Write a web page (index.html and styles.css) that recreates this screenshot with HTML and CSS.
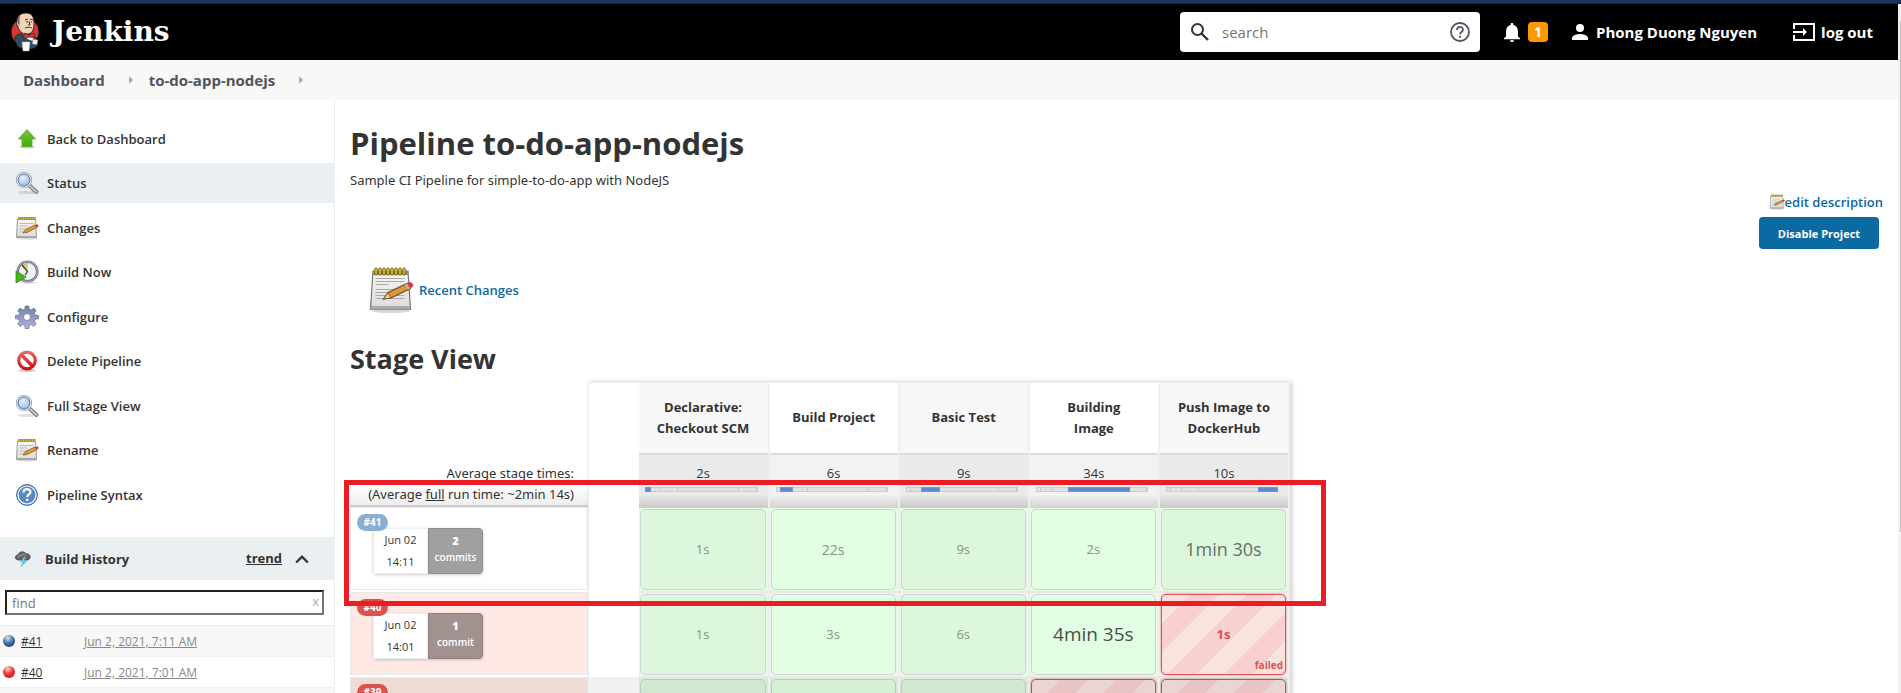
FILE: index.html
```html
<!DOCTYPE html>
<html lang="en">
<head>
<meta charset="utf-8">
<title>to-do-app-nodejs [Jenkins]</title>
<link rel="stylesheet" href="styles.css">
</head>
<body>
<svg class="defs" aria-hidden="true">
  <defs>
    <linearGradient id="gGreen" x1="0" y1="0" x2="0" y2="1"><stop offset="0" stop-color="#7cc243"/><stop offset="1" stop-color="#3fae05"/></linearGradient>
    <linearGradient id="gGear" x1="0" y1="0" x2="0" y2="1"><stop offset="0" stop-color="#6f82ad"/><stop offset="1" stop-color="#b5b3dc"/></linearGradient>
    <linearGradient id="gRed" gradientUnits="userSpaceOnUse" x1="0" y1="2" x2="0" y2="21"><stop offset="0" stop-color="#ee6a6a"/><stop offset="1" stop-color="#c80d0d"/></linearGradient>
    <linearGradient id="gPaper" x1="0" y1="0" x2="0" y2="1"><stop offset="0" stop-color="#f7f7f7"/><stop offset="1" stop-color="#dcdcdc"/></linearGradient>
    <radialGradient id="gBlueBall" cx=".4" cy=".25" r=".7"><stop offset="0" stop-color="#e4ecdc"/><stop offset=".5" stop-color="#5583ba"/><stop offset="1" stop-color="#1f4b8c"/></radialGradient>
    <radialGradient id="gRedBall" cx=".4" cy=".25" r=".7"><stop offset="0" stop-color="#ffd9d0"/><stop offset=".5" stop-color="#f24a4a"/><stop offset="1" stop-color="#df1414"/></radialGradient>
    <radialGradient id="gLens" cx=".4" cy=".35" r=".7"><stop offset="0" stop-color="#e3effa"/><stop offset="1" stop-color="#8fb6e2"/></radialGradient>
  </defs>
  <symbol id="notepad" viewBox="0 0 48 48">
    <ellipse cx="23" cy="45" rx="19" ry="2" fill="#000" opacity=".15"/>
    <path d="M5 5h35l2.500 38.500h-40z" fill="url(#gPaper)" stroke="#777" stroke-width="1.200"/>
    <path d="M3 40h39v3.500H2.500z" fill="#aaa"/>
    <path d="M5 5h35v4H4.800z" fill="#8c8c84"/>
    <path d="M7.500 12.500h29M7.500 15.500h29M7.500 18.500h13M7.500 23.500h20M7.500 26.500h18M7.500 29.500h29M7.500 32.500h29" stroke="#aaa"/>
    <path d="M8 3v5M12 3v5M16 3v5M20 3v5M24 3v5M28 3v5M32 3v5M36 3v5" stroke="#6c5a05" stroke-width="3.200" stroke-linecap="round"/>
    <path d="M8 3v5M12 3v5M16 3v5M20 3v5M24 3v5M28 3v5M32 3v5M36 3v5" stroke="#f1d53a" stroke-width="1.400" stroke-linecap="round"/>
    <path d="M15.500 33l4.500-6.500L39 17.500l3.500 5L23 32z" fill="#d89a3c" stroke="#70481a" stroke-width="1.200"/>
    <path d="M15.500 33l4.500-6.500 3 5.500z" fill="#e8cf9c" stroke="#70481a" stroke-width=".8"/>
    <path d="M38 18l2-1c3-1.500 6 1 4.500 3.500L41.500 23z" fill="#e8312f" stroke="#a44" stroke-width=".6"/>
    <path d="M37 18.500l1.800-.9 3.400 5-2 1z" fill="#b9b9b9"/>
  </symbol>
  <symbol id="notepad-small" viewBox="0 0 24 24">
    <ellipse cx="12" cy="22.500" rx="10" ry="1" fill="#000" opacity=".15"/>
    <path d="M2.500 3h18l1 18.500h-20z" fill="url(#gPaper)" stroke="#999" stroke-width="1"/>
    <path d="M2 20h19.500v1.500H2z" fill="#aaa"/>
    <path d="M4.500 7.500h14M4.500 10h8M4.500 13h10M4.500 16h6" stroke="#bbb"/>
    <path d="M3 2.500h17.500" stroke="#a28c2a" stroke-width="3"/>
    <path d="M3.500 2.500h17" stroke="#ddc95a" stroke-width="2" stroke-dasharray="1 1.300"/>
    <path d="M8 17l2.500-3.500L20 9l2 2.500L12 16.500z" fill="#dd9b3e" stroke="#7a4e1a" stroke-width=".7"/>
    <path d="M19.800 9.200l1.500-.7c1.500-.5 3 .8 2 2l-1.500 1.100z" fill="#e8312f"/>
  </symbol>
  <symbol id="magnifier" viewBox="0 0 24 24">
    <ellipse cx="12" cy="21.500" rx="9" ry="1.600" fill="#000" opacity=".12"/>
    <path d="M14.500 14.500l7 6.500" stroke="#777" stroke-width="4" stroke-linecap="round"/>
    <path d="M14.500 14.500l7 6.500" stroke="#c6c6c6" stroke-width="2" stroke-linecap="round"/>
    <circle cx="9" cy="9" r="7" fill="url(#gLens)" stroke="#8f9296" stroke-width="2.200"/>
    <circle cx="9" cy="9" r="7" fill="none" stroke="#e5e7e9" stroke-width="1.100"/>
    <circle cx="9" cy="9" r="5.800" fill="none" stroke="#4b7fbe" stroke-width=".8"/>
  </symbol>
</svg>

<div class="strip"></div>
<div class="viewport">
  <div class="page">
    <header class="header">
      <a class="brand" href="#">
        <svg class="brand-logo" viewBox="0 0 28 40" role="img" aria-label="Jenkins logo">
          <ellipse cx="14" cy="20" rx="13.500" ry="14" fill="#d33833"/>
          <path d="M4 25c2-2 5-4 8-3l9 1c4 1 5 4 5 7v5c-6 3-14 3-19 0C5 32 3 28 4 25z" fill="#2f4b5c" stroke="#111" stroke-width=".7"/>
          <path d="M6 9C6 4 10 1 15 1c6 0 8 4 8 10 0 7-2 11-7 11-6 0-9-5-9-8-2-1-2-3-1-5z" fill="#f0d6b7" stroke="#201010" stroke-width=".8"/>
          <path d="M6 9c0-3 2-5 3-6 0 4-1 6 0 10-2 0-3-2-3-4z" fill="#857064"/>
          <path d="M14 8l3-1M19 7l3 1M18 9l1 4h-2M14 16c2-1 5-1 7 0M15 10h2M20 10h1" fill="none" stroke="#231f20" stroke-width=".9"/>
          <path d="M11 20l6 5 6-3-1 7-6-2z" fill="#fff"/>
          <path d="M13 21l5 2 5-2 1 5-6-1-5 2z" fill="#d33833" stroke="#231f20" stroke-width=".6"/>
          <path d="M11 30h8l-1 9h-6z" fill="#fff" stroke="#aaa" stroke-width=".5"/>
          <path d="M22 27l5 1-1 5-5-1z" fill="#eee" stroke="#555" stroke-width=".5"/>
        </svg>
        <span class="brand-name">Jenkins</span>
      </a>
      <form class="search" role="search">
        <svg class="search-icon" viewBox="0 0 20 20"><circle cx="7.500" cy="7.500" r="5.500" fill="none" stroke="#333" stroke-width="2"/><path d="M11.500 11.500l6.500 6.500" stroke="#333" stroke-width="2.400"/></svg>
        <input class="search-input" type="text" placeholder="search" aria-label="search">
        <a class="search-help" href="#" aria-label="Help"><svg viewBox="0 0 20 20"><circle cx="10" cy="10" r="9" fill="none" stroke="#4d545d" stroke-width="1.800"/><path d="M7 8c0-4 6-4 6-.3C13 10 10 10 10 12.300M10 13.700v2" fill="none" stroke="#4d545d" stroke-width="1.800"/></svg></a>
      </form>
      <button class="bell" type="button" aria-label="1 notification">
        <svg viewBox="0 0 16 20"><path d="M8 20c1.200 0 2-.8 2-1.800H6C6 19.200 6.800 20 8 20zM14 14.500V9.500c0-3.200-1.700-5.700-4.600-6.400V2.200C9.400.600 6.600.6 6.600 2.200v.9C3.700 3.800 2 6.300 2 9.500v5L0 16.300v.9h16v-.9z" fill="#fff"/></svg>
        <span class="badge">1</span>
      </button>
      <a class="user" href="#"><svg viewBox="0 0 16 16"><circle cx="8" cy="4" r="4" fill="#fff"/><path d="M0 16v-2c0-2.700 5.300-4 8-4s8 1.300 8 4v2z" fill="#fff"/></svg>Phong Duong Nguyen</a>
      <a class="logout" href="#"><svg viewBox="0 0 22 18"><path d="M1 6V1h20v16H1V12M0 9h12" fill="none" stroke="#fff" stroke-width="2"/><path d="M10 5l4 4-4 4z" fill="#fff"/></svg>log out</a>
    </header>

    <nav class="crumbs" aria-label="Breadcrumb">
      <a href="#">Dashboard</a><i class="crumb-arrow"></i>
      <a href="#">to-do-app-nodejs</a><i class="crumb-arrow"></i>
    </nav>

    <div class="body">
      <aside class="side">
        <ul class="tasks">
          <li><a class="task" href="#"><svg viewBox="0 0 24 24"><ellipse cx="12" cy="20" rx="8" ry="1.500" opacity=".2"/><path d="M12 2.500L3.500 12H7v7.500h10V12h3.500z" fill="url(#gGreen)" stroke="#5aa02c" stroke-width=".8"/></svg>Back to Dashboard</a></li>
          <li><a class="task is-active" href="#"><svg><use href="#magnifier"/></svg>Status</a></li>
          <li><a class="task" href="#"><svg><use href="#notepad-small"/></svg>Changes</a></li>
          <li><a class="task" href="#"><svg viewBox="0 0 24 24"><ellipse cx="14" cy="22.500" rx="8" ry="1.200" opacity=".15"/><circle cx="12.500" cy="11.500" r="9.800" fill="#f2f2ee" stroke="#74789a" stroke-width="2.600"/><circle cx="12.500" cy="11.500" r="10" fill="none" stroke="#b2b4cc" stroke-width=".8"/><path d="M12.500 11.500L7 5c2-2 4-2 6-2z" fill="#e3c755"/><path d="M7 5l5.500 6.500L10 15" fill="none" stroke="#333" stroke-width="1.200"/><path d="M1 11v12l10-6z" fill="#48b41a" stroke="#2f8a0c" stroke-width=".8"/></svg>Build Now</a></li>
          <li><a class="task" href="#"><svg viewBox="0 0 24 24"><path fill-rule="evenodd" d="M10.300 1h3.400l.5 3.200 2 .8 2.600-1.900 2.400 2.400L19.300 8l.8 2.100 3.400.4v3.200l-3.400.5-.8 2 1.900 2.700-2.400 2.400-2.600-1.900-2 .8-.5 3.300h-3.400l-.5-3.300-2-.8-2.600 1.900-2.400-2.400 1.900-2.700-.8-2-3.400-.5v-3.200l3.400-.4.8-2.100-1.900-2.500L5.200 3.100 7.800 5l2-.8zM12 8.500a3.500 3.500 0 100 7 3.500 3.500 0 000-7z" fill="url(#gGear)" stroke="#6c759f" stroke-width=".8"/></svg>Configure</a></li>
          <li><a class="task" href="#"><svg viewBox="0 0 24 24"><ellipse cx="12" cy="21.500" rx="9" ry="1.500" opacity=".2"/><path d="M5.500 5l13 13" stroke="url(#gRed)" stroke-width="3.500"/><circle cx="12" cy="11.500" r="8.300" fill="none" stroke="url(#gRed)" stroke-width="3.200"/></svg>Delete Pipeline</a></li>
          <li><a class="task" href="#"><svg><use href="#magnifier"/></svg>Full Stage View</a></li>
          <li><a class="task" href="#"><svg><use href="#notepad-small"/></svg>Rename</a></li>
          <li><a class="task" href="#"><svg viewBox="0 0 24 24"><circle cx="12" cy="12" r="10.400" fill="#5f8fc9" stroke="#3465a4" stroke-width="1"/><circle cx="12" cy="12" r="9" fill="#5a88c0" stroke="#fff" stroke-width="1.200"/><path d="M8.500 9.500C8.500 5 15.500 5.300 15.500 9c0 2.500-3.300 2.400-3.300 5M12.200 15.700v2.400" fill="none" stroke="#fff" stroke-width="2.200"/></svg>Pipeline Syntax</a></li>
        </ul>

        <section class="history">
          <div class="history-head">
            <svg class="storm" viewBox="0 0 16 16"><path d="M3 9C-1 8 0 4 3 4c1-4 7-4 8-1 4-1 6 4 2 6z" fill="#666" stroke="#444" stroke-width=".8"/><path d="M3 6c1-2 2-1 3-1 1-2 3-2 5 0" fill="none" stroke="#aaa"/><path d="M9 6L5.500 11H8l-2 5 6-6.500H9l2-3.500z" fill="#5ad2f5" stroke="#2b9ed0" stroke-width=".4"/></svg>
            <h2>Build History</h2>
            <a href="#">trend</a>
            <button class="collapse" type="button" aria-label="Collapse"><svg viewBox="0 0 12 8"><path d="M1 7l5-5 5 5" fill="none" stroke="#333" stroke-width="2"/></svg></button>
          </div>
          <div class="find">
            <input type="text" placeholder="find" aria-label="find">
            <button type="button" aria-label="Clear">x</button>
          </div>
          <table class="builds">
            <tr><td class="ball"><svg viewBox="0 0 14 14"><circle cx="7" cy="7" r="6" fill="url(#gBlueBall)"/></svg></td><td class="num"><a href="#">#41</a></td><td><a class="when" href="#">Jun 2, 2021, 7:11 AM</a></td></tr>
            <tr><td class="ball"><svg viewBox="0 0 14 14"><circle cx="7" cy="7" r="6" fill="url(#gRedBall)"/></svg></td><td class="num"><a href="#">#40</a></td><td><a class="when" href="#">Jun 2, 2021, 7:01 AM</a></td></tr>
            <tr><td class="ball"></td><td class="num"></td><td></td></tr>
          </table>
        </section>
      </aside>

      <main class="main">
        <h1>Pipeline to-do-app-nodejs</h1>
        <p class="desc">Sample CI Pipeline for simple-to-do-app with NodeJS</p>
        <div class="actions">
          <a class="edit" href="#"><svg><use href="#notepad-small"/></svg>edit description</a>
          <button class="disable" type="button">Disable Project</button>
        </div>
        <a class="recent" href="#"><svg><use href="#notepad"/></svg>Recent Changes</a>
        <h2 class="stage-title">Stage View</h2>

        <div class="stage-view">
          <div class="legend">
            <div class="legend-avg"><span>Average stage times:</span><span>(Average <u>full</u> run time: ~2min 14s)</span></div>
            <div class="run"><span class="run-id ok">#41</span><div class="run-box"><div class="date"><span>Jun 02</span><span>14:11</span></div><div class="commits"><b>2</b><span>commits</span></div></div></div>
            <div class="run bad"><span class="run-id">#40</span><div class="run-box"><div class="date"><span>Jun 02</span><span>14:01</span></div><div class="commits"><b>1</b><span>commit</span></div></div></div>
            <div class="run bad dim"><span class="run-id">#39</span></div>
          </div>
          <table class="stages">
            <thead>
              <tr class="names"><th class="gutter"></th><th>Declarative:<br>Checkout SCM</th><th>Build Project</th><th>Basic Test</th><th>Building<br>Image</th><th>Push Image to<br>DockerHub</th></tr>
              <tr class="avgs">
                <td class="gutter"></td>
                <td><span>2s</span><div class="bar"><i class="on" style="width:4%"></i><i style="width:10%"></i><i style="width:15%"></i><i style="width:55%"></i><i style="width:16%"></i></div></td>
                <td><span>6s</span><div class="bar"><i style="width:4%"></i><i class="on" style="width:10%"></i><i style="width:15%"></i><i style="width:55%"></i><i style="width:16%"></i></div></td>
                <td><span>9s</span><div class="bar"><i style="width:4%"></i><i style="width:10%"></i><i class="on" style="width:15%"></i><i style="width:55%"></i><i style="width:16%"></i></div></td>
                <td><span>34s</span><div class="bar"><i style="width:4%"></i><i style="width:10%"></i><i style="width:15%"></i><i class="on" style="width:55%"></i><i style="width:16%"></i></div></td>
                <td><span>10s</span><div class="bar"><i style="width:4%"></i><i style="width:10%"></i><i style="width:15%"></i><i style="width:55%"></i><i class="on" style="width:16%"></i></div></td>
              </tr>
            </thead>
            <tbody>
              <tr><td class="gutter"></td><td><div class="cell">1s</div></td><td><div class="cell mid">22s</div></td><td><div class="cell">9s</div></td><td><div class="cell">2s</div></td><td><div class="cell long">1min 30s</div></td></tr>
              <tr><td class="gutter"></td><td><div class="cell">1s</div></td><td><div class="cell">3s</div></td><td><div class="cell">6s</div></td><td><div class="cell longest">4min 35s</div></td><td class="failed"><div class="cell fail">1s<small>failed</small></div></td></tr>
              <tr class="dim"><td class="gutter"></td><td><div class="cell"></div></td><td><div class="cell"></div></td><td><div class="cell"></div></td><td class="failed"><div class="cell fail"></div></td><td class="failed"><div class="cell fail"></div></td></tr>
            </tbody>
          </table>
          <div class="marker"></div>
        </div>
      </main>
    </div>
  </div>
  <div class="scroll-track"><div class="scroll-thumb"></div></div>
</div>
</body>
</html>
```
FILE: styles.css
```css
* { box-sizing: border-box; }
body { margin: 0; height: 100vh; overflow: hidden; display: flex; flex-direction: column; background: #fff; color: #333; font: 13px/21px "Open Sans", "Noto Sans", sans-serif; }
a { color: inherit; text-decoration: none; }
button { font: inherit; cursor: pointer; }
h1, h2, p, ul { margin: 0; padding: 0; }
table { border-collapse: collapse; }
.defs { position: absolute; width: 0; height: 0; }
.strip { height: 4px; flex: none; background: #1b365d; border-bottom: 1px solid #10233f; }
.viewport { flex: 1; min-height: 0; display: flex; }
.page { flex: 1; min-width: 0; display: flex; flex-direction: column; overflow: hidden; }
.scroll-track { width: 3px; background: #f1f1f1; padding: 17px 0 0 2px; }
.scroll-thumb { height: 76%; background: #c1c1c1; }

.header { flex: none; height: 56px; background: #000; color: #fff; display: flex; align-items: center; padding: 0 25px 0 11px; font-size: 15px; font-weight: 700; }
.brand { display: flex; align-items: center; gap: 13px; margin-right: auto; }
.brand-logo { width: 28px; height: 40px; }
.brand-name { font: bold 28px/36px "DejaVu Serif", serif; }
.search { width: 300px; height: 40px; display: flex; align-items: center; background: #fff; border-radius: 4px; padding: 0 10px; margin-right: 24px; }
.search-icon { width: 20px; height: 20px; flex: none; }
.search-input { flex: 1; min-width: 0; border: 0; outline: 0; background: none; padding: 0 12px; font: 15px/20px "Open Sans", sans-serif; }
.search-input::placeholder { color: #757575; }
.search-help { width: 20px; height: 20px; }
.search-help svg { display: block; }
.bell { display: flex; align-items: center; gap: 8px; padding: 0; border: 0; background: none; color: #fff; margin-right: 24px; }
.bell svg { width: 16px; height: 20px; }
.badge { width: 20px; height: 20px; border-radius: 4px; background: #ff9800; font-size: 14px; line-height: 20px; }
.user, .logout { display: flex; align-items: center; white-space: nowrap; }
.user { gap: 8px; margin-right: 36px; }
.user svg { width: 16px; height: 16px; }
.logout { gap: 6px; }
.logout svg { width: 22px; height: 18px; }

.crumbs { flex: none; height: 40px; background: #f8f8f8; display: flex; align-items: center; padding-left: 23px; color: #4d545d; font-size: 15px; font-weight: 700; }
.crumb-arrow { border-left: 4px solid #a9adb1; border-top: 4px solid transparent; border-bottom: 4px solid transparent; margin: 0 16px 0 24px; }

.body { flex: 1; min-height: 0; display: flex; }
.side { width: 335px; flex: none; border-right: 1px solid #eaeff2; }
.tasks { list-style: none; padding: 19px 0 18px; }
.tasks li { margin-bottom: 4px; }
.tasks li:nth-child(even) { margin-bottom: 5px; }
.task { height: 40px; display: flex; align-items: center; gap: 8px; padding-left: 15px; font-size: 13px; font-weight: 600; }
.task.is-active { background: #eaeff2; }
.task svg { width: 24px; height: 24px; }
.history-head { height: 43px; background: #eaeff2; display: flex; align-items: center; padding: 0 25px 0 15px; }
.storm { width: 16px; height: 16px; margin-right: 14px; }
.history-head h2 { font-size: 13px; line-height: 20px; margin-right: auto; }
.history-head a { font-weight: 700; text-decoration: underline; margin-right: 13px; }
.collapse { border: 0; padding: 0; background: none; width: 14px; height: 12px; display: flex; }
.collapse svg { width: 14px; }
.find { position: relative; margin: 10px 10px 10px 5px; }
.find input { display: block; width: 100%; height: 25px; border: 2px inset #767676; padding: 0 5px; font: 13px/20px "Open Sans", sans-serif; }
.find button { position: absolute; right: 5px; top: 2px; border: 0; background: none; padding: 0; color: #aaa; line-height: 19px; }
.builds { width: 100%; font-size: 12px; }
.builds tr { border-top: 1px solid #eaeff2; }
.builds tr:nth-child(odd) { background: #f8f8f8; }
.builds td { height: 31px; padding: 0; }
.builds a { text-decoration: underline; }
.builds .ball { width: 21px; padding-left: 2px; }
.ball svg { display: block; width: 14px; height: 14px; }
.num { width: 63px; }
.when { color: #888; }

.main { flex: 1; min-width: 0; padding: 23px 15px 0 15px; }
h1 { font-size: 31px; line-height: 40px; }
.desc { font-family: "Noto Sans", sans-serif; line-height: 20px; margin-top: 7px; }
.actions { display: flex; flex-direction: column; align-items: flex-end; gap: 5px; margin-top: 2px; }
.edit { display: flex; align-items: center; color: #0b6aa2; font-weight: 600; line-height: 20px; }
.edit svg { width: 16px; height: 16px; }
.disable { width: 120px; height: 32px; margin-right: 4px; padding: 0; border: 0; border-radius: 4px; background: #0b6aa2; color: #fff; font-size: 11px; font-weight: 700; }
.recent { display: flex; align-items: center; gap: 3px; margin: 17px 0 0 18px; color: #0b6aa2; font-weight: 600; width: max-content; }
.recent svg { width: 48px; height: 48px; }
.stage-title { font-size: 27px; line-height: 36px; margin-top: 27px; }

.stage-view { position: relative; display: flex; margin-top: 5px; }
.legend { width: 238px; padding-top: 72px; }
.legend-avg { height: 53px; display: flex; flex-direction: column; justify-content: flex-end; text-align: right; padding: 0 14px 0 0; border-bottom: 2px solid #ccc; background: linear-gradient(#fff 60%, #eee); font-family: "Noto Sans", sans-serif; }
.run { position: relative; height: 83px; margin-bottom: 2px; border: 1px solid #e6e9eb; padding: 20px 0 0 22px; }
.run.bad { background: #ffe9e4; }
.run.dim { background: #f0dcd7; }
.run-id { position: absolute; left: 6px; top: 6px; min-width: 31px; height: 17px; padding: 0 6px; border-radius: 9px; background: #d9534f; color: #fff; font-size: 10px; font-weight: 700; line-height: 17px; text-align: center; }
.run-id.ok { background: #8aadd2; }
.run-box { display: flex; width: 110px; height: 46px; font-size: 11px; box-shadow: 0 1px 3px #0003; border-radius: 4px; }
.date, .commits { width: 55px; display: flex; flex-direction: column; align-items: center; }
.date { background: #fff; border: 1px solid #eaeff2; justify-content: space-between; line-height: 22px; }
.commits { background: #a0a0a0; border: 1px solid #8d8d8d; border-radius: 0 4px 4px 0; color: #fff; font-size: 10px; font-weight: 600; line-height: 16px; padding-top: 4px; }
.commits b { font-size: 11px; }
.bad .commits { background: #a1928f; border-color: #8d807d; }

.stages { width: 702px; table-layout: fixed; border: 1px solid #e6eeee; box-shadow: 2px 0 5px #0003; }
.stages th, .stages td { padding: 0; text-align: center; border-right: 2px solid #f0eff0; }
.stages .gutter { width: 50px; background: #fff; border-right: 0; }
.names th { height: 71px; font-weight: 700; }
.names th:nth-child(even) { background: #f8f8f8; }
.avgs td { height: 54px; border-top: 2px solid #ddd; background: linear-gradient(#f2f2f2 75%, #d2d2d2); vertical-align: top; }
.stages .avgs td { padding-top: 8px; }
.avgs td:nth-child(even) { background: linear-gradient(#eaeaea 75%, #c9c9c9); }
.stages .avgs .gutter { border-top: 0; background: #fff; }
.bar { display: flex; height: 5px; margin: 3px 10px 0 6px; background: #e2e2e2; border: 1px solid #ccc; }
.bar i { border-right: 1px solid #c8c8c8; }
.bar .on { background: #5b8bd0; border: 0; outline: 1px solid #6f98d0; }
.stages tbody td { padding: 1px 2px 1px 1px; background: #e9f8e9; border-bottom: 2px solid #ebe8ec; }
.stages tbody .failed { background: #f6f2f2; }
.stages tbody .gutter { border-bottom: 0; background: #fff; }
.cell { position: relative; height: 81px; border: 1px solid #ccd4d0; border-radius: 5px; background: #e3ffe3; color: #83957f; display: flex; align-items: center; justify-content: center; }
td:nth-child(even) .cell { background: #ddf7dd; }
.mid { font-size: 14px; }
.long { font-size: 18px; color: #667066; }
.longest { font-size: 19px; color: #474f47; }
.cell.fail, td:nth-child(even) .cell.fail { border: 1px solid #d9534f; box-shadow: 0 0 2px #d9534f; color: #d9534f; font-weight: 700; background: repeating-linear-gradient(135deg, #f8e3de 0 20px, #f8d0d2 20px 40px); }
.fail small { position: absolute; right: 2px; bottom: 0; font-size: 10px; line-height: 18px; }
.stages tbody .dim .gutter { background: #f1f1f1; }
.stages tbody .dim .cell { filter: brightness(.94); }
.stages tbody .dim td { background: #dbe8db; }
.marker { position: absolute; left: -6px; top: 98px; width: 982px; height: 126px; border: 5px solid #ed1c24; }
```
